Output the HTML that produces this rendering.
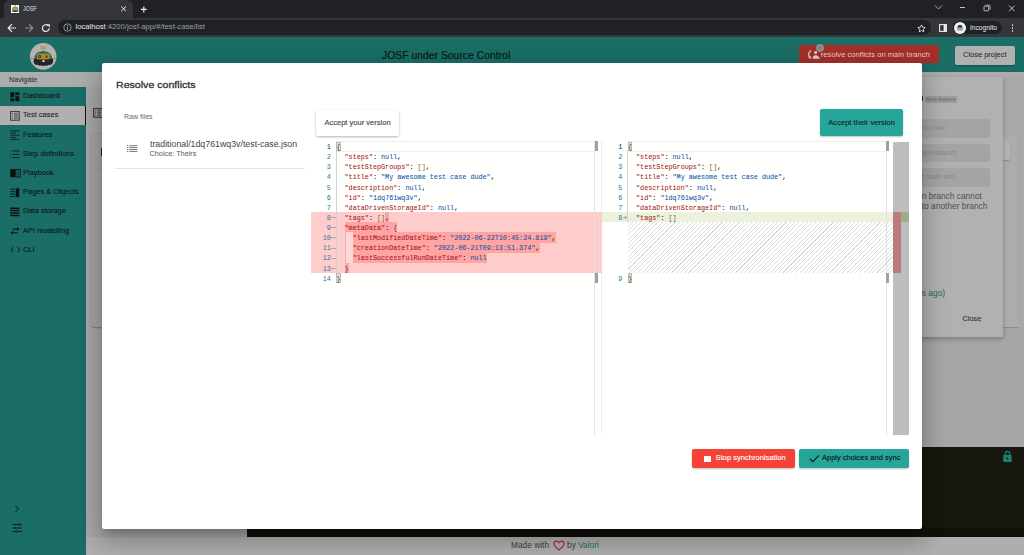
<!DOCTYPE html>
<html><head><meta charset="utf-8">
<style>
*{box-sizing:border-box;margin:0;padding:0}
html,body{width:1024px;height:555px;overflow:hidden;background:#a6a6a6;font-family:"Liberation Sans",sans-serif}
.a{position:absolute}
.t{position:absolute;white-space:nowrap;line-height:1}
.code{position:absolute;font-family:"Liberation Mono",monospace;font-size:6.78px;white-space:pre;line-height:10.13px;-webkit-text-stroke:0.04px currentColor}
.k{color:#a31515}.s{color:#0451a5}.n{color:#0451a5}.p{color:#000}.b1{color:#4a4a3a}.b2{color:#7a6a20}
</style></head><body>
<!-- browser chrome -->
<div class="a" style="left:0;top:0;width:1024px;height:37px;background:#202124"></div>
<div class="a" style="left:4px;top:0;width:129px;height:18px;background:#35363a;border-radius:6px 6px 0 0"></div>
<div class="a" style="left:0;top:17.5px;width:1024px;height:19.5px;background:#35363a"></div>
<div class="a" style="left:0;top:0;width:4px;height:17.5px;background:#202124;border-bottom-right-radius:4px"></div>
<div class="a" style="left:133px;top:0;width:6px;height:17.5px;background:#202124;border-bottom-left-radius:4px"></div>
<!-- favicon -->
<div class="a" style="left:10.8px;top:5px;width:8.4px;height:8.2px;background:#fafafa"></div>
<svg class="a" style="left:10.8px;top:5px" width="8.4" height="8.2" viewBox="0 0 8.4 8.2">
<rect x="3.4" y="0" width="1.6" height="1" fill="#e0a030"/>
<path d="M1.2 3Q1.2 1.4 4.2 1.4Q7.2 1.4 7.2 3V5.8H1.2Z" fill="#3aa890"/>
<rect x="2.4" y="2.6" width="3.6" height="2.6" fill="#d8961c"/>
<path d="M1.2 5.4H7.2V6.6Q4.2 7.6 1.2 6.6Z" fill="#202020"/>
</svg>
<div class="t" style="left:23.3px;top:5.2px;font-size:7px;color:#dfe1e5;transform:scaleX(0.77);transform-origin:0 0">JOSF</div>
<svg class="a" style="left:120px;top:4px" width="8" height="10" viewBox="0 0 8 10"><path d="M1.2 2.4L6 7.2M6 2.4L1.2 7.2" stroke="#e8eaed" stroke-width="1"/></svg>
<svg class="a" style="left:139px;top:4px" width="10" height="10" viewBox="0 0 10 10"><path d="M4.8 2.4V8.4M1.8 5.4H7.8" stroke="#e8eaed" stroke-width="1.2"/></svg>
<!-- window controls -->
<svg class="a" style="left:934px;top:3px" width="9" height="8" viewBox="0 0 9 8"><path d="M1 2.5L4.5 6L8 2.5" stroke="#b9bcc0" stroke-width="0.9" fill="none"/></svg>
<div class="a" style="left:959.8px;top:7.2px;width:5.6px;height:1px;background:#c4c7ca"></div>
<svg class="a" style="left:983px;top:4px" width="8" height="8" viewBox="0 0 8 8"><rect x="1" y="2.2" width="4.6" height="4.6" rx="0.8" stroke="#c4c7ca" stroke-width="0.9" fill="none"/><path d="M2.4 1.2H6.2A0.8 0.8 0 0 1 7 2V5.6" stroke="#c4c7ca" stroke-width="0.9" fill="none"/></svg>
<svg class="a" style="left:1008px;top:4.5px" width="8" height="7" viewBox="0 0 8 7"><path d="M1 0.6L6.6 6.2M6.6 0.6L1 6.2" stroke="#d6d8da" stroke-width="0.9"/></svg>
<!-- toolbar -->
<svg class="a" style="left:7px;top:23px" width="10" height="10" viewBox="0 0 10 10"><path d="M9 5H1.6M5 1.2L1.2 5L5 8.8" stroke="#e8eaed" stroke-width="1.2" fill="none"/></svg>
<svg class="a" style="left:23.5px;top:23px" width="10" height="10" viewBox="0 0 10 10"><path d="M1 5H8.4M5 1.2L8.8 5L5 8.8" stroke="#8d9095" stroke-width="1.2" fill="none"/></svg>
<svg class="a" style="left:41px;top:23px" width="10" height="10" viewBox="0 0 10 10"><path d="M8.2 5.2A3.4 3.4 0 1 1 7.1 2.6" stroke="#e8eaed" stroke-width="1.2" fill="none"/><path d="M5.6 1.2H8.8V4.4Z" fill="#e8eaed"/></svg>
<div class="a" style="left:58.2px;top:20.2px;width:872.7px;height:14.6px;background:#202124;border-radius:7.3px"></div>
<svg class="a" style="left:62.8px;top:23.3px" width="9" height="9" viewBox="0 0 9 9"><circle cx="4.5" cy="4.5" r="3.7" stroke="#a8abb0" stroke-width="0.8" fill="none"/><path d="M4.5 3.8V6.6" stroke="#a8abb0" stroke-width="0.9"/><circle cx="4.5" cy="2.6" r="0.5" fill="#a8abb0"/></svg>
<div class="t" style="left:75.6px;top:23.4px;font-size:7.63px;color:#9aa0a6"><span style="color:#e8eaed">localhost</span>:4200/josf-app/#/test-case/list</div>
<svg class="a" style="left:917px;top:23.5px" width="9" height="9" viewBox="0 0 24 24"><path d="M12 2.5l2.9 6.3 6.9.7-5.2 4.6 1.5 6.8L12 17.4l-6.1 3.5 1.5-6.8L2.2 9.5l6.9-.7z" stroke="#e8eaed" stroke-width="2.3" fill="none" stroke-linejoin="round"/></svg>
<svg class="a" style="left:939px;top:24.2px" width="8" height="8" viewBox="0 0 8 8"><rect x="0.6" y="0.6" width="6.8" height="6.8" stroke="#e8eaed" stroke-width="1.1" fill="none"/><rect x="4.6" y="0.6" width="2.8" height="6.8" fill="#e8eaed"/></svg>
<div class="a" style="left:953.3px;top:21.2px;width:48.4px;height:13px;background:#202124;border-radius:6.5px"></div>
<div class="a" style="left:953.7px;top:21.5px;width:12.6px;height:12.6px;background:#f1f3f4;border-radius:50%"></div>
<svg class="a" style="left:955px;top:23px" width="10" height="10" viewBox="0 0 10 10"><path d="M2.6 4.3H7.4L6.6 2H3.4Z" fill="#35363a"/><path d="M1.8 4.6H8.2" stroke="#35363a" stroke-width="0.6"/><circle cx="3.6" cy="6.3" r="1.1" stroke="#35363a" stroke-width="0.6" fill="none"/><circle cx="6.4" cy="6.3" r="1.1" stroke="#35363a" stroke-width="0.6" fill="none"/></svg>
<div class="t" style="left:970px;top:24.3px;font-size:7px;color:#e8eaed;transform:scaleX(0.95);transform-origin:0 0">Incognito</div>
<div class="a" style="left:1011.8px;top:24.2px;width:1.6px;height:1.6px;background:#e8eaed;border-radius:50%"></div>
<div class="a" style="left:1011.8px;top:27.2px;width:1.6px;height:1.6px;background:#e8eaed;border-radius:50%"></div>
<div class="a" style="left:1011.8px;top:30.2px;width:1.6px;height:1.6px;background:#e8eaed;border-radius:50%"></div>
<!-- teal header -->
<div class="a" style="left:0;top:37px;width:1024px;height:35px;background:#1a6e66"></div>
<!-- logo -->
<svg class="a" style="left:29px;top:43px" width="28" height="28" viewBox="0 0 28 28">
<circle cx="14.2" cy="13.4" r="13.3" fill="#b3b3b3"/>
<path d="M5.2 16.5Q5 8.6 14.2 8Q23.2 8.6 23.2 16.5Q21 19 14 19Q7 19 5.2 16.5Z" fill="#1c7169"/>
<rect x="8" y="10.8" width="12.6" height="5.8" rx="1.2" fill="#b98520"/>
<circle cx="10.8" cy="13.6" r="1.6" fill="#3a2c22"/><circle cx="10.8" cy="13.6" r="0.7" fill="#aaa"/>
<circle cx="17.5" cy="13.6" r="1.4" fill="#6b4a1a"/>
<path d="M5 15.6Q9 17 14 16.6Q19 17 24 15.6L24 19L23 21L21.5 22L20 21.8L18.5 22.8L16.5 22.4L14.5 23L12.5 22.4L10.5 22.8L9 21.8L7 22L5.5 21L4.5 19Z" fill="#262626"/>
<rect x="13.4" y="17.2" width="2.2" height="1.8" fill="#e6e6e6"/>
<circle cx="12.6" cy="4.6" r="1.2" stroke="#b98520" stroke-width="0.8" fill="none"/><circle cx="15.6" cy="4.6" r="1.2" stroke="#b98520" stroke-width="0.8" fill="none"/>
<path d="M14.1 5.8V8.2" stroke="#b98520" stroke-width="0.7"/>
<circle cx="2.6" cy="15.4" r="0.9" fill="#b98520"/><circle cx="25.6" cy="15.4" r="0.9" fill="#b98520"/>
<path d="M2.6 15.4H5M23 15.4H25.6" stroke="#b98520" stroke-width="0.5"/>
</svg>
<div class="t" style="left:382px;top:50.5px;font-size:10.4px;color:#0a1716;-webkit-text-stroke:0.15px #0a1716">JOSF under Source Control</div>
<!-- red button -->
<div class="a" style="left:798.6px;top:45px;width:140px;height:18.2px;background:#a62f28;border-radius:2px 2px 0 0"></div>
<svg class="a" style="left:807px;top:49px" width="14" height="11" viewBox="0 0 14 11">
<path d="M4.2 1.8Q1.6 3 1.6 5.6Q1.6 8 3.4 9.2" stroke="#d9d2d2" stroke-width="1.2" fill="none"/>
<path d="M1.2 8.4L4.4 9.8L3.2 6.6Z" fill="#d9d2d2"/>
<circle cx="8.6" cy="3.6" r="1.5" fill="#d9d2d2"/>
<path d="M5.4 9.8Q5.6 6.4 8.6 6.2Q11.8 6.4 12.8 9.8Z" fill="#d9d2d2"/>
</svg>
<div class="a" style="left:815.9px;top:43.9px;width:7.8px;height:7.8px;border-radius:50%;background:#8d8d8d"></div>
<div class="a" style="left:818.2px;top:46.2px;width:3.2px;height:3.2px;border-radius:50%;background:#7c7c7c"></div>
<div class="t" style="left:820.8px;top:50.7px;font-size:7.64px;color:#dad2d2">resolve conflicts on main branch</div>
<!-- close project -->
<div class="a" style="left:955px;top:46.2px;width:60px;height:18.5px;background:#b1b1b1;border-radius:2px;box-shadow:0 1px 1.5px rgba(0,0,0,.25)"></div>
<div class="t" style="left:963px;top:51.2px;font-size:7.47px;color:#2b2b2b;-webkit-text-stroke:0.06px #2b2b2b">Close project</div>

<!-- navigate bar -->
<div class="a" style="left:0;top:72px;width:1024px;height:14.6px;background:#acacac"></div>
<div class="t" style="left:9px;top:75.6px;font-size:7.9px;color:#3a3a3a;-webkit-text-stroke:0.12px #3a3a3a;transform:scaleX(0.905);transform-origin:0 0">Navigate</div>

<!-- content grey -->
<div class="a" style="left:86px;top:86.6px;width:938px;height:470px;background:#a6a6a6"></div>

<!-- sidebar -->
<div class="a" style="left:0;top:86.6px;width:86px;height:470px;background:#1a6e66"></div>
<div class="a" style="left:0;top:105.8px;width:86px;height:19.3px;background:#b0b0b0"></div>
<div class="a" style="left:85px;top:105.8px;width:1.2px;height:19.3px;background:#111"></div>
<div style="position:absolute;left:23.3px;top:0;font-size:7.9px;color:#0b1917;-webkit-text-stroke:0.12px #0b1917;transform:scaleX(0.95);transform-origin:0 0">
<div class="t" style="left:0;top:92.2px">Dashboard</div>
<div class="t" style="left:0;top:111.4px;color:#262626">Test cases</div>
<div class="t" style="left:0;top:130.6px">Features</div>
<div class="t" style="left:0;top:149.8px">Step definitions</div>
<div class="t" style="left:0;top:169px">Playbook</div>
<div class="t" style="left:0;top:188.2px">Pages &amp; Objects</div>
<div class="t" style="left:0;top:207.4px">Data storage</div>
<div class="t" style="left:0;top:226.6px">API modelling</div>
<div class="t" style="left:0;top:245.8px">CLI</div>
</div>
<!-- sidebar icons -->
<svg class="a" style="left:10px;top:91.5px" width="10" height="10" viewBox="0 0 10 10"><path d="M0.3 0.3H4.3V5.3H0.3ZM5.3 0.3H9.3V3.3H5.3ZM0.3 6.3H4.3V9.3H0.3ZM5.3 4.3H9.3V9.3H5.3Z" fill="#0b1210"/></svg>
<svg class="a" style="left:10px;top:110.5px" width="10" height="10" viewBox="0 0 10 10"><rect x="0.6" y="0.6" width="8.6" height="8.6" stroke="#3a2e3a" stroke-width="1" fill="none"/><path d="M2.2 2.8H3M2.2 4.9H3M2.2 7H3M4 2.8H7.8M4 4.9H7.8M4 7H7.8" stroke="#2a2a3a" stroke-width="0.9"/></svg>
<svg class="a" style="left:10px;top:129.8px" width="10" height="10" viewBox="0 0 10 10"><path d="M0.3 0.8H9.6M0.3 2.95H6.1M0.3 5.2H9.6M0.3 7.5H6.1M0.3 9.6H9.6" stroke="#0b1210" stroke-width="0.75"/></svg>
<svg class="a" style="left:10px;top:149px" width="10" height="10" viewBox="0 0 10 10"><path d="M2.3 1.9H9.6M2.3 5.3H9.6M2.3 8.5H9.6" stroke="#0b1210" stroke-width="0.8"/><path d="M0.3 1.2V2.6M0.3 4.6V6M0.3 7.8V9.2" stroke="#0b1210" stroke-width="0.7"/></svg>
<svg class="a" style="left:9.5px;top:168.3px" width="11" height="10" viewBox="0 0 11 10"><path d="M0.2 1.2H5.2V9.2H0.2Z" fill="#0b1210"/><rect x="5.8" y="1.4" width="4.4" height="7.6" stroke="#0b1210" stroke-width="0.9" fill="none"/><path d="M7 3.5H9M7 5.2H9M7 6.9H9" stroke="#0b1210" stroke-width="0.6"/></svg>
<svg class="a" style="left:10px;top:187.5px" width="10" height="10" viewBox="0 0 10 10"><path d="M0.3 1.2H4.6M0.3 3.6H4.6M0.3 6H4.6M0.3 8.4H4.6" stroke="#0b1210" stroke-width="0.9"/><rect x="5.6" y="0.4" width="3.6" height="8.8" fill="#0b1210"/></svg>
<svg class="a" style="left:10px;top:206.7px" width="10" height="10" viewBox="0 0 10 10"><path d="M0.2 1.2H9.4M0.2 3.6H9.4M0.2 6H9.4M0.2 8.4H9.4" stroke="#0b1210" stroke-width="1.5"/></svg>
<svg class="a" style="left:10px;top:225.9px" width="10" height="10" viewBox="0 0 10 10"><path d="M1 6.8H7.5M1.5 6.8L3 5.4M2.5 3.2H9M8.5 3.2L7 1.8" stroke="#0b1210" stroke-width="1"/><path d="M0.6 6.8L2.6 5V8.6Z M9.4 3.2L7.4 1.4V5Z" fill="#0b1210"/></svg>
<svg class="a" style="left:9.5px;top:245px" width="11" height="10" viewBox="0 0 11 10"><path d="M3.4 2.2L1 4.8L3.4 7.4M7.4 2.2L9.8 4.8L7.4 7.4" stroke="#0b1210" stroke-width="0.95" fill="none"/></svg>
<svg class="a" style="left:14px;top:505px" width="6" height="8" viewBox="0 0 6 8"><path d="M1.4 0.8L4.6 3.8L1.4 6.8" stroke="#0b1210" stroke-width="1" fill="none"/></svg>
<svg class="a" style="left:12px;top:522.6px" width="11" height="10" viewBox="0 0 11 10"><path d="M0.3 1.5H6.5M8.2 1.5H10M0.3 5H2.3M4 5H10M0.3 8.5H4M5.7 8.5H10" stroke="#0b1210" stroke-width="0.9"/><path d="M7.3 0.2V2.8M3.2 3.7V6.3M4.9 7.2V9.8" stroke="#0b1210" stroke-width="1"/></svg>

<!-- content icon behind -->
<div class="a" style="left:91.6px;top:134px;width:30px;height:193px;background:#a4a4a4;border-radius:2px;box-shadow:0 0.8px 1.6px rgba(0,0,0,.3)"></div>
<div class="a" style="left:92px;top:168.4px;width:20px;height:0.6px;background:#9c9c9c"></div>
<svg class="a" style="left:93px;top:107.8px" width="10" height="10" viewBox="0 0 10 10"><rect x="0.6" y="0.6" width="8.8" height="8.6" stroke="#2f2a2f" stroke-width="1" fill="none"/><path d="M2.2 2.8H3M2.2 4.9H3M2.2 7H3M4 2.8H8M4 4.9H8M4 7H8" stroke="#223" stroke-width="0.9"/></svg>
<div class="a" style="left:100.6px;top:148.4px;width:1.4px;height:7.4px;background:#222"></div>

<!-- sync card behind -->
<div class="a" style="left:1003px;top:77px;width:21px;height:250px;background:#a9a9a9"></div>
<div class="a" style="left:1003px;top:136px;width:15px;height:191.4px;background:#acacac;box-shadow:0 1px 1px rgba(0,0,0,.15)"></div>
<div class="a" style="left:990px;top:141px;width:20px;height:19px;background:#b4b4b4;border-radius:2px;box-shadow:0 1px 1px rgba(0,0,0,.2)"></div>
<div class="a" style="left:880px;top:76.6px;width:122.5px;height:260.2px;background:#b1b1b1;border-radius:2px;box-shadow:0 2px 5px rgba(0,0,0,.28)"></div>
<div class="a" style="left:921.6px;top:95.8px;width:1.5px;height:5.6px;background:#262626;border-radius:0.5px"></div>
<div class="a" style="left:924.8px;top:95.6px;width:32px;height:7.8px;background:#9b9b9b;border-radius:1px"></div>
<div class="t" style="left:926px;top:96.9px;font-size:5.6px;color:#6f6f6f">beta feature</div>
<div class="a" style="left:900px;top:119.2px;width:89.5px;height:18.7px;background:#a4a4a4;border-radius:2px"></div>
<div class="a" style="left:900px;top:143.8px;width:89.5px;height:18.7px;background:#a4a4a4;border-radius:2px"></div>
<div class="a" style="left:900px;top:168.4px;width:89.5px;height:18.2px;background:#a4a4a4;border-radius:2px"></div>
<div class="t" style="left:921.6px;top:124.2px;font-size:7.3px;color:#878787">nc now</div>
<div class="t" style="left:921.6px;top:148.5px;font-size:7.3px;color:#878787">itch branch</div>
<div class="t" style="left:921.6px;top:173.1px;font-size:7.3px;color:#878787">t main into</div>
<div class="t" style="left:921.8px;top:192.2px;font-size:8.4px;color:#4e4e4e">n branch cannot</div>
<div class="t" style="left:921.8px;top:202.4px;font-size:8.4px;color:#4e4e4e">to another branch</div>
<div class="t" style="left:921.8px;top:288.7px;font-size:8.4px;color:#1b6b63">s ago)</div>
<div class="t" style="left:962.5px;top:315.3px;font-size:7.4px;color:#2e2e2e;-webkit-text-stroke:0.1px #2e2e2e">Close</div>

<!-- dark band -->
<div class="a" style="left:86px;top:536.8px;width:938px;height:19px;background:#aeaeae"></div>
<div class="a" style="left:247px;top:447px;width:777px;height:90px;background:#18170f"></div>
<div class="a" style="left:247px;top:527.5px;width:777px;height:9.3px;background:#11110b"></div>
<svg class="a" style="left:1001.5px;top:450px" width="11" height="13" viewBox="0 0 11 13"><path d="M3.2 5.2V3.6A2.3 2.3 0 0 1 7.8 3.6V5.2" stroke="#1b8074" stroke-width="1.2" fill="none"/><rect x="1.2" y="4.9" width="8.4" height="7.1" rx="0.5" fill="#1b8074"/><circle cx="5.4" cy="8.4" r="0.95" fill="#16150e"/></svg>
<!-- footer -->
<div class="t" style="left:511px;top:540.6px;font-size:8.35px;color:#3d3d3d">Made with</div>
<svg class="a" style="left:552.8px;top:539.8px" width="12" height="11" viewBox="0 0 12 11"><path d="M6 10Q1 6.5 1 3.6Q1 1.2 3.3 1.2Q5 1.2 6 2.8Q7 1.2 8.7 1.2Q11 1.2 11 3.6Q11 6.5 6 10Z" stroke="#b52a2a" stroke-width="1.2" fill="none"/></svg>
<div class="t" style="left:567px;top:540.6px;font-size:8.35px;color:#3d3d3d">by <span style="color:#1a6e66">Valori</span></div>
<!-- modal -->
<div class="a" style="left:102px;top:63.4px;width:820px;height:465.5px;background:#fff;border-radius:2.2px;box-shadow:0 5.9px 8px -3.7px rgba(0,0,0,.2),0 12.8px 20px 1.6px rgba(0,0,0,.14),0 4.8px 24.5px 4.3px rgba(0,0,0,.12)"></div>
<div class="t" style="left:115.6px;top:80.1px;font-size:9.7px;color:#2e2e2e;-webkit-text-stroke:0.28px #2e2e2e;transform:scaleX(1.095);transform-origin:0 0">Resolve conflicts</div>
<div class="t" style="left:123.8px;top:112.6px;font-size:7.6px;color:#6a6a6a;transform:scaleX(0.93);transform-origin:0 0">Raw files</div>
<svg class="a" style="left:127px;top:145.4px" width="11" height="7" viewBox="0 0 11 7"><path d="M0 0.7H1.4M0 2.6H1.4M0 4.5H1.4M0 6.4H1.4M2.4 0.7H10.4M2.4 2.6H10.4M2.4 4.5H10.4M2.4 6.4H10.4" stroke="#555" stroke-width="0.8"/></svg>
<div class="t" style="left:149.5px;top:140.4px;font-size:8.3px;color:#444;transform:scaleX(1.06);transform-origin:0 0">traditional/1dq761wq3v/test-case.json</div>
<div class="t" style="left:149.5px;top:150.4px;font-size:7.3px;color:#5a5a5a">Choice: Theirs</div>
<div class="a" style="left:115px;top:168.2px;width:190px;height:0.8px;background:#e3e3e3"></div>
<div class="a" style="left:315.6px;top:110px;width:83.8px;height:26px;background:#fff;border-radius:2px;box-shadow:0 1px 2.5px rgba(0,0,0,.3)"></div>
<div class="t" style="left:324.4px;top:118.8px;font-size:7.55px;color:#424242;-webkit-text-stroke:0.12px #424242">Accept your version</div>
<div class="a" style="left:819.9px;top:109.3px;width:83.3px;height:26.7px;background:#26a69a;border-radius:2px;box-shadow:0 1px 2px rgba(0,0,0,.25)"></div>
<div class="t" style="left:828.3px;top:118.6px;font-size:7.58px;color:#142421;-webkit-text-stroke:0.12px #142421">Accept their version</div>
<div class="a" style="left:599.6px;top:141.3px;width:2.2px;height:293px;background:linear-gradient(90deg,#f4f4f4,#ececec)"></div>
<div class="a" style="left:310.5px;top:141.3px;width:290.0px;height:293.3px;background:#fffffe"></div>
<div class="a" style="left:310.5px;top:212.21px;width:291.1px;height:60.78px;background:#ffcccc"></div>
<div class="a" style="left:385.24px;top:212.21px;width:4.07px;height:10.13px;background:#ffa3a3"></div>
<div class="a" style="left:344.54px;top:222.34px;width:52.91px;height:10.13px;background:#ffa3a3"></div>
<div class="a" style="left:352.68px;top:232.47px;width:203.50px;height:10.13px;background:#ffa3a3"></div>
<div class="a" style="left:352.68px;top:242.60px;width:187.22px;height:10.13px;background:#ffa3a3"></div>
<div class="a" style="left:352.68px;top:252.73px;width:134.31px;height:10.13px;background:#ffa3a3"></div>
<div class="a" style="left:344.54px;top:262.86px;width:4.07px;height:10.13px;background:#ffa3a3"></div>
<div class="a" style="left:344.94px;top:232.47px;width:7.74px;height:30.39px;background:#ffd9d9"></div>
<div class="a" style="left:336.1px;top:141.30px;width:257.7px;height:10.23px;border:0.8px solid #eeeeee;border-right:none"></div>
<div class="a" style="left:335.80px;top:151.43px;width:0.6px;height:121.56px;background:#d3d3d3"></div>
<div class="a" style="left:344.64px;top:232.47px;width:0.6px;height:30.39px;background:#e0b8b8"></div>
<div class="a" style="left:336.40px;top:141.80px;width:4.37px;height:9.13px;background:#dfe8d8;border:0.5px solid #b9b9b9"></div>
<div class="a" style="left:336.40px;top:273.49px;width:4.37px;height:9.13px;background:#dfe8d8;border:0.5px solid #b9b9b9"></div>
<div class="code" style="left:308.9px;top:142.00px;width:22px;text-align:right;color:#0b216f;-webkit-text-stroke:0">1</div>
<div class="code" style="left:308.9px;top:152.13px;width:22px;text-align:right;color:#237893;-webkit-text-stroke:0">2</div>
<div class="code" style="left:308.9px;top:162.26px;width:22px;text-align:right;color:#237893;-webkit-text-stroke:0">3</div>
<div class="code" style="left:308.9px;top:172.39px;width:22px;text-align:right;color:#237893;-webkit-text-stroke:0">4</div>
<div class="code" style="left:308.9px;top:182.52px;width:22px;text-align:right;color:#237893;-webkit-text-stroke:0">5</div>
<div class="code" style="left:308.9px;top:192.65px;width:22px;text-align:right;color:#237893;-webkit-text-stroke:0">6</div>
<div class="code" style="left:308.9px;top:202.78px;width:22px;text-align:right;color:#237893;-webkit-text-stroke:0">7</div>
<div class="code" style="left:308.9px;top:212.91px;width:22px;text-align:right;color:#237893;-webkit-text-stroke:0">8</div>
<div class="a" style="left:331.1px;top:217.21px;width:5px;height:0.8px;background:#a3adb0"></div>
<div class="code" style="left:308.9px;top:223.04px;width:22px;text-align:right;color:#237893;-webkit-text-stroke:0">9</div>
<div class="a" style="left:331.1px;top:227.34px;width:5px;height:0.8px;background:#a3adb0"></div>
<div class="code" style="left:308.9px;top:233.17px;width:22px;text-align:right;color:#237893;-webkit-text-stroke:0">10</div>
<div class="a" style="left:331.1px;top:237.47px;width:5px;height:0.8px;background:#a3adb0"></div>
<div class="code" style="left:308.9px;top:243.30px;width:22px;text-align:right;color:#237893;-webkit-text-stroke:0">11</div>
<div class="a" style="left:331.1px;top:247.60px;width:5px;height:0.8px;background:#a3adb0"></div>
<div class="code" style="left:308.9px;top:253.43px;width:22px;text-align:right;color:#237893;-webkit-text-stroke:0">12</div>
<div class="a" style="left:331.1px;top:257.73px;width:5px;height:0.8px;background:#a3adb0"></div>
<div class="code" style="left:308.9px;top:263.56px;width:22px;text-align:right;color:#237893;-webkit-text-stroke:0">13</div>
<div class="a" style="left:331.1px;top:267.86px;width:5px;height:0.8px;background:#a3adb0"></div>
<div class="code" style="left:308.9px;top:273.69px;width:22px;text-align:right;color:#237893;-webkit-text-stroke:0">14</div>
<div class="code" style="left:336.40px;top:142.00px"><span class="b1">{</span></div>
<div class="code" style="left:336.40px;top:152.13px">  <span class="k">"steps"</span><span class="p">:</span> <span class="n">null</span><span class="p">,</span></div>
<div class="code" style="left:336.40px;top:162.26px">  <span class="k">"testStepGroups"</span><span class="p">:</span> <span class="b2">[</span><span class="b2">]</span><span class="p">,</span></div>
<div class="code" style="left:336.40px;top:172.39px">  <span class="k">"title"</span><span class="p">:</span> <span class="s">"My awesome test case dude"</span><span class="p">,</span></div>
<div class="code" style="left:336.40px;top:182.52px">  <span class="k">"description"</span><span class="p">:</span> <span class="n">null</span><span class="p">,</span></div>
<div class="code" style="left:336.40px;top:192.65px">  <span class="k">"id"</span><span class="p">:</span> <span class="s">"1dq761wq3v"</span><span class="p">,</span></div>
<div class="code" style="left:336.40px;top:202.78px">  <span class="k">"dataDrivenStorageId"</span><span class="p">:</span> <span class="n">null</span><span class="p">,</span></div>
<div class="code" style="left:336.40px;top:212.91px">  <span class="k">"tags"</span><span class="p">:</span> <span class="b2">[</span><span class="b2">]</span><span class="p">,</span></div>
<div class="code" style="left:336.40px;top:223.04px">  <span class="k">"metaData"</span><span class="p">:</span> <span class="b1">{</span></div>
<div class="code" style="left:336.40px;top:233.17px">    <span class="k">"lastModifiedDateTime"</span><span class="p">:</span> <span class="s">"2022-06-22T10:45:24.819"</span><span class="p">,</span></div>
<div class="code" style="left:336.40px;top:243.30px">    <span class="k">"creationDateTime"</span><span class="p">:</span> <span class="s">"2022-06-21T09:13:51.374"</span><span class="p">,</span></div>
<div class="code" style="left:336.40px;top:253.43px">    <span class="k">"lastSuccessfulRunDateTime"</span><span class="p">:</span> <span class="n">null</span></div>
<div class="code" style="left:336.40px;top:263.56px">  <span class="b1">}</span></div>
<div class="code" style="left:336.40px;top:273.69px"><span class="b1">}</span></div>
<div class="a" style="left:594.40px;top:141.30px;width:0.6px;height:293.30px;background:#e2e2e2"></div>
<div class="a" style="left:594.70px;top:141.30px;width:3.1px;height:10.13px;background:#a0a0a0"></div>
<div class="a" style="left:594.70px;top:272.99px;width:3.1px;height:10.13px;background:#a0a0a0"></div>
<div class="a" style="left:602.0px;top:141.3px;width:289.7px;height:293.3px;background:#fffffe"></div>
<div class="a" style="left:602.0px;top:212.21px;width:306.6px;height:10.13px;background:#ebf1dd"></div>
<div class="a" style="left:627.9px;top:222.34px;width:265.1px;height:50.65px;background:repeating-linear-gradient(-45deg,#fffffe 0,#fffffe 2.25px,#dddddd 2.25px,#dddddd 3.02px)"></div>
<div class="a" style="left:627.6px;top:141.30px;width:257.4px;height:10.23px;border:0.8px solid #eeeeee;border-right:none"></div>
<div class="a" style="left:627.30px;top:151.43px;width:0.6px;height:70.91px;background:#d3d3d3"></div>
<div class="a" style="left:627.90px;top:141.80px;width:4.37px;height:9.13px;background:#dfe8d8;border:0.5px solid #b9b9b9"></div>
<div class="a" style="left:627.90px;top:273.49px;width:4.37px;height:9.13px;background:#dfe8d8;border:0.5px solid #b9b9b9"></div>
<div class="code" style="left:600.4px;top:142.00px;width:22px;text-align:right;color:#0b216f;-webkit-text-stroke:0">1</div>
<div class="code" style="left:600.4px;top:152.13px;width:22px;text-align:right;color:#237893;-webkit-text-stroke:0">2</div>
<div class="code" style="left:600.4px;top:162.26px;width:22px;text-align:right;color:#237893;-webkit-text-stroke:0">3</div>
<div class="code" style="left:600.4px;top:172.39px;width:22px;text-align:right;color:#237893;-webkit-text-stroke:0">4</div>
<div class="code" style="left:600.4px;top:182.52px;width:22px;text-align:right;color:#237893;-webkit-text-stroke:0">5</div>
<div class="code" style="left:600.4px;top:192.65px;width:22px;text-align:right;color:#237893;-webkit-text-stroke:0">6</div>
<div class="code" style="left:600.4px;top:202.78px;width:22px;text-align:right;color:#237893;-webkit-text-stroke:0">7</div>
<div class="code" style="left:600.4px;top:212.91px;width:22px;text-align:right;color:#237893;-webkit-text-stroke:0">8</div>
<div class="a" style="left:623.2px;top:217.31px;width:3.6px;height:0.7px;background:#9aa8ad"></div>
<div class="a" style="left:624.6px;top:215.86px;width:0.7px;height:3.6px;background:#9aa8ad"></div>
<div class="code" style="left:600.4px;top:273.69px;width:22px;text-align:right;color:#237893;-webkit-text-stroke:0">9</div>
<div class="code" style="left:627.90px;top:142.00px"><span class="b1">{</span></div>
<div class="code" style="left:627.90px;top:152.13px">  <span class="k">"steps"</span><span class="p">:</span> <span class="n">null</span><span class="p">,</span></div>
<div class="code" style="left:627.90px;top:162.26px">  <span class="k">"testStepGroups"</span><span class="p">:</span> <span class="b2">[</span><span class="b2">]</span><span class="p">,</span></div>
<div class="code" style="left:627.90px;top:172.39px">  <span class="k">"title"</span><span class="p">:</span> <span class="s">"My awesome test case dude"</span><span class="p">,</span></div>
<div class="code" style="left:627.90px;top:182.52px">  <span class="k">"description"</span><span class="p">:</span> <span class="n">null</span><span class="p">,</span></div>
<div class="code" style="left:627.90px;top:192.65px">  <span class="k">"id"</span><span class="p">:</span> <span class="s">"1dq761wq3v"</span><span class="p">,</span></div>
<div class="code" style="left:627.90px;top:202.78px">  <span class="k">"dataDrivenStorageId"</span><span class="p">:</span> <span class="n">null</span><span class="p">,</span></div>
<div class="code" style="left:627.90px;top:212.91px">  <span class="k">"tags"</span><span class="p">:</span> <span class="b2">[</span><span class="b2">]</span></div>
<div class="code" style="left:627.90px;top:273.69px"><span class="b1">}</span></div>
<div class="a" style="left:885.60px;top:141.30px;width:0.6px;height:293.30px;background:#e2e2e2"></div>
<div class="a" style="left:885.90px;top:141.30px;width:3.1px;height:10.13px;background:#a0a0a0"></div>
<div class="a" style="left:885.90px;top:272.99px;width:3.1px;height:10.13px;background:#a0a0a0"></div>
<div class="a" style="left:893.2px;top:141.5px;width:15.4px;height:293px;background:#bdbdbd"></div>
<div class="a" style="left:893.2px;top:211.8px;width:7.6px;height:61.2px;background:#b97b7b"></div>
<div class="a" style="left:900.8px;top:211.8px;width:7.8px;height:10.4px;background:#9eab8c"></div>
<div class="a" style="left:692.2px;top:448.8px;width:102.5px;height:19.1px;background:#f44336;border-radius:2px;box-shadow:0 1px 2px rgba(0,0,0,.25)"></div>
<div class="a" style="left:703.9px;top:455.6px;width:7px;height:6.6px;background:#fff"></div>
<div class="t" style="left:715.6px;top:453.8px;font-size:7.55px;color:#fff;-webkit-text-stroke:0.12px #fff">Stop synchronisation</div>
<div class="a" style="left:799.1px;top:448.8px;width:109.7px;height:19.1px;background:#26a69a;border-radius:2px;box-shadow:0 1px 2px rgba(0,0,0,.25)"></div>
<svg class="a" style="left:808.5px;top:453px" width="11" height="11" viewBox="0 0 11 11"><path d="M0.8 5.6L3.8 8.6L10 2.4" stroke="#111" stroke-width="1.1" fill="none"/></svg>
<div class="t" style="left:822px;top:453.8px;font-size:7.51px;color:#111;-webkit-text-stroke:0.12px #111">Apply choices and sync</div>
</body></html>
